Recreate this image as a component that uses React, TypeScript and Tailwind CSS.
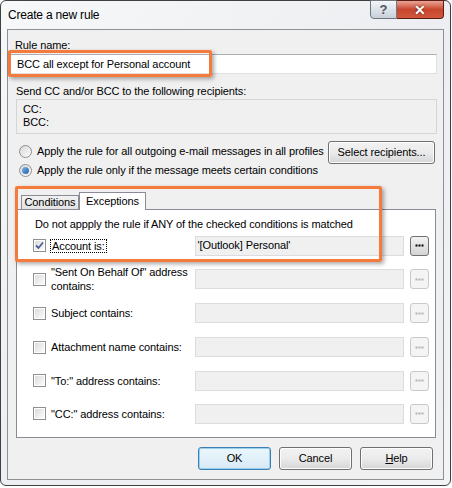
const font = "font-['Segoe_UI','Liberation_Sans',sans-serif]";

const rows = [
  { label: ["Account is:"], value: "'[Outlook] Personal'", checked: true, h: "h-[33px]" },
  { label: ['"Sent On Behalf Of" address', "contains:"], value: "", checked: false, h: "h-[34px]" },
  { label: ["Subject contains:"], value: "", checked: false, h: "h-[34px]" },
  { label: ["Attachment name contains:"], value: "", checked: false, h: "h-[34px]" },
  { label: ['"To:" address contains:'], value: "", checked: false, h: "h-[33px]" },
  { label: ['"CC:" address contains:'], value: "", checked: false, h: "h-[33px]" },
];

function Checkbox({ checked }: { checked: boolean }) {
  return (
    <div className="w-[13px] h-[13px] border border-[#8e8f8f] bg-white p-px shrink-0">
      <div className="w-full h-full bg-gradient-to-br from-[#dcdcdc] to-[#fbfbfb] flex items-center justify-center">
        {checked && (
          <svg width="9" height="9" viewBox="0 0 9 9">
            <path d="M1 4.5 L3.5 7 L8 1.5" stroke="#4a5f97" strokeWidth="1.8" fill="none" />
          </svg>
        )}
      </div>
    </div>
  );
}

function Radio({ on }: { on: boolean }) {
  return (
    <div className="w-[13px] h-[13px] rounded-full border border-[#8e8f8f] bg-gradient-to-br from-[#d8d8d8] to-[#fcfcfc] flex items-center justify-center shrink-0">
      {on && <div className="w-[7px] h-[7px] rounded-full bg-gradient-to-br from-[#7fb4e6] to-[#1e5fa8]" />}
    </div>
  );
}

function Dots({ enabled }: { enabled: boolean }) {
  return (
    <div
      className={`w-[19px] h-[20px] rounded-[3px] border flex items-center justify-center ${
        enabled
          ? "border-[#707070] bg-gradient-to-b from-[#f2f2f2] to-[#d4d4d4]"
          : "border-[#c9c9c9] bg-[#f4f4f4]"
      }`}
    >
      <svg width="9" height="3" viewBox="0 0 9 3">
        {[0.5, 3.5, 6.5].map((x) => (
          <rect key={x} x={x} y="0.5" width="2" height="2" fill={enabled ? "#000" : "#adb2b5"} />
        ))}
      </svg>
    </div>
  );
}

function Button({ children, w, focus }: { children: React.ReactNode; w: string; focus?: boolean }) {
  return (
    <div
      className={`${w} h-[23px] rounded-[3px] border flex items-center justify-center text-black ${
        focus
          ? "border-[#3c7fb1] bg-gradient-to-b from-[#eaf6fd] to-[#d9eaf5] shadow-[inset_0_0_0_1px_#98d1ef]"
          : "border-[#707070] bg-gradient-to-b from-[#f2f2f2] via-[#ebebeb] to-[#d6d6d6] shadow-[inset_0_0_0_1px_#fcfcfc]"
      }`}
    >
      {children}
    </div>
  );
}

export default function App() {
  return (
    <div className={`w-[452px] h-[488px] bg-white ${font} text-[11px] tracking-[-0.1px] text-black`}>
      <div className="relative w-[451px] h-[486px] border border-[#404040] rounded-[6px] bg-gradient-to-br from-[#f7f8f9] via-[#eceef1] to-[#f3f4f6] flex flex-col">
        {/* title bar */}
        <div className="h-[28px] flex items-start">
          <div className="pl-[7px] pt-[6px] text-[12px] tracking-[-0.2px] leading-[16px] flex-1">Create a new rule</div>
          <div className="flex mr-[6px] -mt-px">
            <div className="w-[27px] h-[19px] border border-[#6f7780] rounded-bl-[4px] bg-gradient-to-b from-[#f5f7f9] via-[#dde3e9] to-[#c8d0d8] flex items-center justify-center">
              <span className="text-[#4f5560] text-[13px] font-bold leading-none">?</span>
            </div>
            <div className="w-[47px] h-[19px] border border-l-0 border-[#5a1c14] rounded-br-[4px] bg-gradient-to-b from-[#e8a494] via-[#c7452d] to-[#d2583e] flex items-center justify-center">
              <span className="text-white text-[14px] font-bold leading-none [text-shadow:0_0_2px_#3a1008]">✕</span>
            </div>
          </div>
        </div>

        {/* client area */}
        <div className="mx-[6px] h-[451px] border border-[#8d9094] bg-[#f0f0f0] relative">
          <div className="h-[24px] pl-[7px] pt-[8px] leading-[14px]">Rule name:</div>
          <div className="mx-[2px] w-[427px] h-[20px] bg-white border border-[#dde1e5] border-t-[#abadb3] pl-[6px] flex items-center">
            BCC all except for Personal account
          </div>
          <div className="pl-[8px] mt-[10px] leading-[14px]">Send CC and/or BCC to the following recipients:</div>
          <div className="ml-[8px] mt-[1px] w-[421px] h-[35px] border border-[#d5d5d5] pl-[6px] pt-[3px] leading-[13px]">
            <div>CC:</div>
            <div>BCC:</div>
          </div>

          <div className="flex mt-[7px] ml-[11px] mr-[8px]">
            <div className="flex flex-col flex-1">
              <div className="h-[19px] flex items-center gap-[5px] mt-[1px]">
                <Radio on={false} />
                <span>Apply the rule for all outgoing e-mail messages in all profiles</span>
              </div>
              <div className="h-[19px] flex items-center gap-[5px]">
                <Radio on={true} />
                <span>Apply the rule only if the message meets certain conditions</span>
              </div>
            </div>
            <Button w="w-[107px]">Select recipients...</Button>
          </div>

          {/* tabs */}
          <div className="ml-[8px] mt-[11px] flex items-end h-[18px]">
            <div className="ml-[5px] w-[58px] h-[14px] border border-b-0 border-[#898c95] bg-gradient-to-b from-[#f2f2f2] to-[#e3e3e3] flex items-center justify-center leading-none">
              Conditions
            </div>
            <div className="w-[67px] h-[18px] -mb-px z-10 border border-b-0 border-[#898c95] bg-white flex items-start justify-center pt-[1px] leading-[14px]">
              Exceptions
            </div>
          </div>
          <div className="ml-[8px] w-[420px] h-[229px] border border-[#898c95] bg-white flex flex-col">
            <div className="h-[19px] pl-[18px] pt-[7px] leading-[14px]">
              Do not appply the rule if ANY of the checked conditions is matched
            </div>
            {rows.map((r, i) => (
              <div key={i} className={`${r.h} flex items-center pl-[16px] pr-[6px]`}>
                <Checkbox checked={r.checked} />
                <div className="w-[149px] pl-[5px] leading-[14px]">
                  {i === 0 ? (
                    <span className="outline outline-1 outline-dotted outline-black px-px">{r.label[0]}</span>
                  ) : (
                    r.label.map((l) => <div key={l}>{l}</div>)
                  )}
                </div>
                <div className="w-[210px] h-[20px] border border-[#dadcdf] bg-[#f0f0f0] pl-[2px] flex items-center">
                  {r.value}
                </div>
                <div className="ml-[6px]">
                  <Dots enabled={r.checked} />
                </div>
              </div>
            ))}
          </div>

          <div className="flex justify-end gap-[8px] mt-[9px] mr-[10px]">
            <Button w="w-[73px]" focus>OK</Button>
            <Button w="w-[73px]">Cancel</Button>
            <Button w="w-[73px]">
              <span><span className="underline">H</span>elp</span>
            </Button>
          </div>
        </div>

        {/* highlight boxes */}
        <div className="absolute left-[7px] top-[49px] w-[204px] h-[27px] border-[3px] border-[#f47b3b] rounded-[2px] shadow-[2px_2px_4px_rgba(0,0,0,0.35)]" />
        <div className="absolute left-[14px] top-[185px] w-[367px] h-[76px] border-[3px] border-[#f47b3b] rounded-[2px] shadow-[2px_2px_4px_rgba(0,0,0,0.35)]" />
      </div>
    </div>
  );
}
